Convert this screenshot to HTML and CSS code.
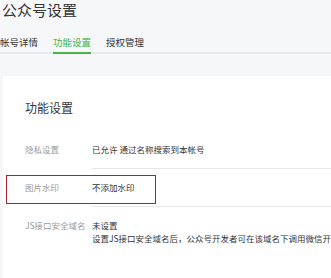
FILE: index.html
```
<!DOCTYPE html>
<html lang="zh-CN">
<head>
<meta charset="utf-8">
<title>公众号设置</title>
<link rel="stylesheet" href="styles.css">
</head>
<body>
<div class="page">
  <h1 class="title">公众号设置</h1>
  <div class="tabs">
    <span class="tab">帐号详情</span>
    <span class="tab active">功能设置</span>
    <span class="tab">授权管理</span>
  </div>
  <div class="card">
    <h2 class="card-title">功能设置</h2>
    <div class="row">
      <div class="label">隐私设置</div>
      <div class="value">已允许 通过名称搜索到本帐号</div>
    </div>
    <div class="row marked">
      <div class="label">图片水印</div>
      <div class="value">不添加水印</div>
      <div class="mark"></div>
    </div>
    <div class="row last">
      <div class="label">JS接口安全域名</div>
      <div class="value">未设置<br>设置JS接口安全域名后，公众号开发者可在该域名下调用微信开放的JS接口</div>
    </div>
  </div>
</div>
</body>
</html>
```
FILE: styles.css
```
html, body {
  margin: 0;
  padding: 0;
  background: #f6f7f9;
  overflow: hidden;
}
body {
  font-family: "Noto Sans CJK SC", "Noto Sans", "Liberation Sans", sans-serif;
  color: #353535;
}
.page {
  width: 331px;
  height: 278px;
  overflow: hidden;
}
.title {
  margin: 0;
  padding-left: 2px;
  font-size: 15px;
  line-height: 20px;
  font-weight: normal;
  color: #353535;
}
.tabs {
  display: flex;
  gap: 15px;
  margin-top: 16px;
  border-bottom: 2px solid #e7eaed;
  white-space: nowrap;
}
.tab {
  font-size: 9.5px;
  line-height: 12px;
  padding-bottom: 4px;
  margin-bottom: -2px;
  border-bottom: 2px solid transparent;
  color: #353535;
}
.tab.active {
  color: #44b549;
  border-bottom-color: #44b549;
}
.card {
  margin: 22px 0 0 3px;
  background: #fff;
  padding: 24px 0 40px 22px;
}
.card-title {
  margin: 0 0 15px;
  font-size: 12px;
  line-height: 16px;
  font-weight: normal;
  color: #353535;
}
.row {
  display: grid;
  grid-template-columns: 67px 1fr;
  position: relative;
  font-size: 8.5px;
  line-height: 13px;
  white-space: nowrap;
}
.label {
  padding: 12px 0;
  color: #9a9a9a;
}
.value {
  padding: 12px 0;
  border-bottom: 1px solid #e7e7eb;
  color: #353535;
}
.row.last .value {
  border-bottom: none;
}
.mark {
  position: absolute;
  left: -19px;
  top: 6px;
  width: 148px;
  height: 27px;
  border: 1.5px solid #a8232d;
}
```
